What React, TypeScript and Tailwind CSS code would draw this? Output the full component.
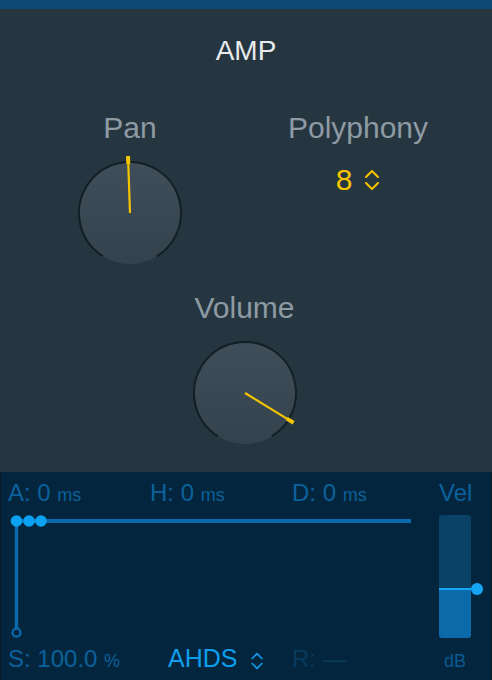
const Knob = ({ angle, id }: { angle: number; id: string }) => {
  const r = 51;
  const c = 2 * Math.PI * r;
  const arc = (296 / 360) * c;
  return (
    <svg width="120" height="120" viewBox="0 0 120 120">
      <defs>
        <linearGradient id={id} x1="0" y1="0" x2="0" y2="1">
          <stop offset="0" stopColor="#3f4e59" />
          <stop offset="1" stopColor="#33424c" />
        </linearGradient>
      </defs>
      <circle cx="60" cy="60" r={r} fill={`url(#${id})`} />
      <circle
        cx="60"
        cy="60"
        r={r}
        fill="none"
        stroke="#131e26"
        strokeWidth="2"
        strokeDasharray={`${arc} ${c - arc}`}
        transform="rotate(122 60 60)"
      />
      <g transform={`rotate(${angle} 60 60)`}>
        <line x1="60" y1="60" x2="60" y2="10" stroke="#f5c400" strokeWidth="2.2" />
        <rect x="58" y="3" width="4" height="8" fill="#f5c400" />
      </g>
    </svg>
  );
};

const UpDown = ({ color, w, h }: { color: string; w: number; h: number }) => (
  <svg width={w} height={h} viewBox="0 0 16 22" fill="none" stroke={color} strokeWidth="2" strokeLinecap="round" strokeLinejoin="round">
    <path d="M2 8 L8 2 L14 8" />
    <path d="M2 14 L8 20 L14 14" />
  </svg>
);

const App = () => {
  return (
    <div className="w-[492px] h-[680px] flex flex-col overflow-hidden font-['Liberation_Sans',Arial,sans-serif]">
      <div className="h-[9px] bg-[#0b4973]" />

      {/* AMP section */}
      <div className="h-[463px] bg-[#263640] flex flex-col">
        <h1 className="pt-[28px] text-center text-[28px] leading-none text-[#e8ebee]">AMP</h1>

        <div className="mt-[48px] ml-[40px] flex gap-[48px] items-start">
          <div className="w-[180px] flex flex-col items-center">
            <div className="text-[30px] leading-none text-[#8e9aa4]">Pan</div>
            <div className="mt-[10px]">
              <Knob angle={-2} id="panFill" />
            </div>
          </div>
          <div className="w-[180px] flex flex-col items-center">
            <div className="text-[30px] leading-none text-[#8e9aa4]">Polyphony</div>
            <div className="mt-[22px] flex items-center gap-[12px] text-[30px] leading-none text-[#f5c400]">
              <span>8</span>
              <UpDown color="#f5c400" w={16} h={22} />
            </div>
          </div>
        </div>

        <div className="mt-[20px] pr-[3px] flex flex-col items-center">
          <div className="text-[30px] leading-none text-[#8e9aa4]">Volume</div>
          <div className="mt-[10px]">
            <Knob angle={121.5} id="volFill" />
          </div>
        </div>
      </div>

      {/* Envelope section */}
      <div className="h-[208px] bg-[#03263e] flex flex-col border-x border-[#0a1c2a]">
        <div className="pt-[9px] pl-[7px] flex text-[24px] leading-none text-[#0c619b]">
          <div className="w-[142px]">
            {"A: 0 "}
            <span className="text-[18px]">ms</span>
          </div>
          <div className="w-[142px]">
            {"H: 0 "}
            <span className="text-[18px]">ms</span>
          </div>
          <div className="w-[147px]">
            {"D: 0 "}
            <span className="text-[18px]">ms</span>
          </div>
          <div>Vel</div>
        </div>

        <div className="flex h-[137px]">
          <svg width="438" height="137" viewBox="0 0 438 137">
            <line x1="15.5" y1="16" x2="410" y2="16" stroke="#0b6aab" strokeWidth="4" />
            <line x1="15.5" y1="16" x2="15.5" y2="124" stroke="#0b6aab" strokeWidth="3.4" />
            <circle cx="15.5" cy="127.7" r="4" fill="#03263e" stroke="#0b6aab" strokeWidth="2.2" />
            <circle cx="15.5" cy="16" r="5.8" fill="#0ca2f2" />
            <circle cx="28" cy="16" r="5.8" fill="#0ca2f2" />
            <circle cx="40" cy="16" r="5.8" fill="#0ca2f2" />
          </svg>
          <div className="relative mt-[10px] w-[32px] h-[123px] flex flex-col">
            <div className="h-[73px] bg-[#0a4166] rounded-t-[3px]" />
            <div className="h-[2px] bg-[#16a5f5]" />
            <div className="flex-1 bg-[#0b6aa9] rounded-b-[3px]" />
            <div className="absolute left-[32px] top-[68px] w-[12px] h-[12px] rounded-full bg-[#16a5f5]" />
          </div>
        </div>

        <div className="mt-[4px] pl-[7px] flex items-baseline leading-none">
          <div className="w-[160px] text-[24px] text-[#0c619b]">
            {"S: 100.0 "}
            <span className="text-[18px]">%</span>
          </div>
          <div className="w-[124px] flex items-center text-[25px] text-[#0e9ded]">
            <span>AHDS</span>
            <span className="ml-[13px] mt-[4px]">
              <UpDown color="#0e9ded" w={14} h={18} />
            </span>
          </div>
          <div className="w-[147px] text-[24px] text-[#0a3a5d]">R: —</div>
          <div className="w-[32px] text-center text-[18px] text-[#0a5a90]">dB</div>
        </div>
      </div>
    </div>
  );
};

export default App;
